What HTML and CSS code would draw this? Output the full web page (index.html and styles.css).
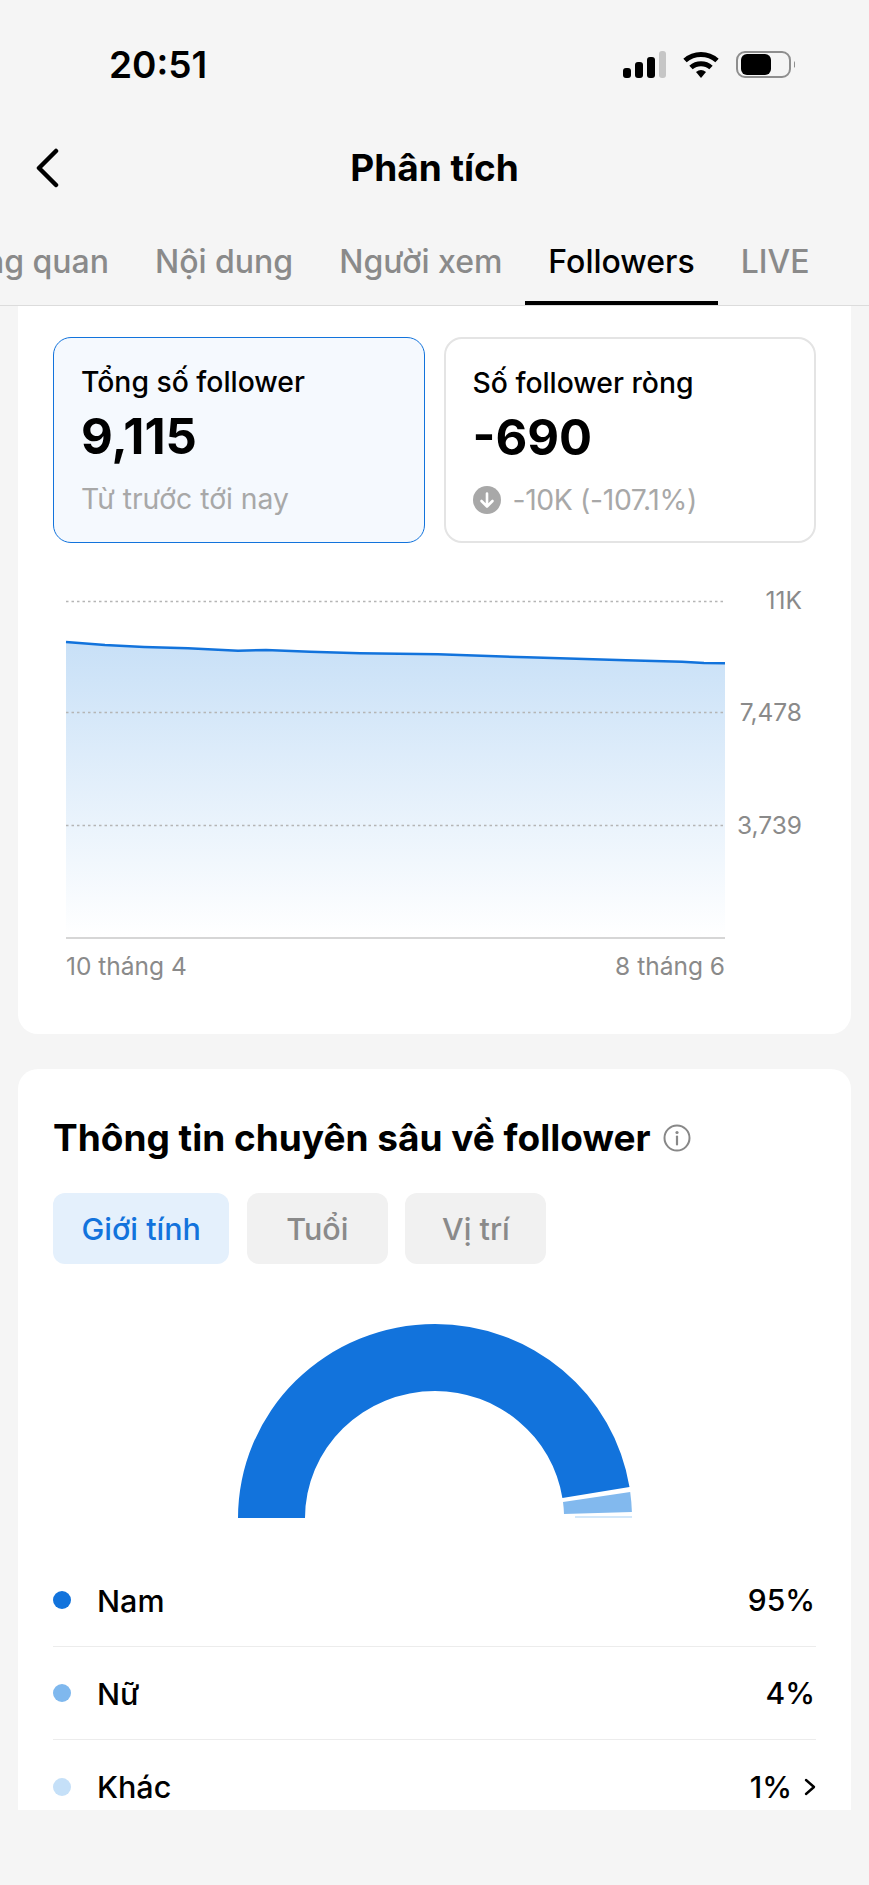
FILE: index.html
```html
<!DOCTYPE html>
<html lang="vi">
<head>
<meta charset="utf-8">
<title>Phân tích</title>
<link rel="stylesheet" href="styles.css">
</head>
<body>
<div class="screen">
  <header class="status">
    <span class="time">20:51</span>
    <svg class="status-icons" viewBox="623 50 172 30" width="172" height="30" aria-hidden="true">
      <rect x="623" y="68" width="8" height="10" rx="3" fill="#000"/>
      <rect x="635" y="62" width="8" height="16" rx="3" fill="#000"/>
      <rect x="647" y="57" width="8" height="21" rx="3" fill="#000"/>
      <rect x="659" y="51" width="7" height="27" rx="3" fill="#c6c6c6"/>
      <g fill="none" stroke="#000" stroke-width="5">
        <path d="M685 60.500 A24 24 0 0 1 717 60.500"/>
        <path d="M691 67.500 A15 15 0 0 1 711 67.500"/>
      </g>
      <path d="M696 72 Q701 68 706 72 L701 78 Z" fill="#000"/>
      <rect x="737" y="52" width="53" height="25" rx="8" fill="none" stroke="#8e8e8e" stroke-width="2"/>
      <rect x="741" y="54" width="30" height="21" rx="6" fill="#000"/>
      <path d="M794 61 L797 64.500 L794 68 Z" fill="#8e8e8e"/>
    </svg>
  </header>

  <nav class="nav">
    <svg class="back" width="24" height="40" viewBox="0 0 24 40" aria-hidden="true">
      <path d="M21 3 L4 20 L21 37" fill="none" stroke="#000" stroke-width="4.500" stroke-linecap="round" stroke-linejoin="round"/>
    </svg>
    <h1 class="title">Phân tích</h1>
  </nav>

  <div class="tabs">
    <span class="tab">Tổng quan</span>
    <span class="tab">Nội dung</span>
    <span class="tab">Người xem</span>
    <span class="tab tab-active">Followers</span>
    <span class="tab">LIVE</span>
  </div>

  <section class="card card-chart">
    <div class="stats">
      <div class="stat stat-active">
        <div class="stat-label">Tổng số follower</div>
        <div class="stat-value">9,115</div>
        <div class="stat-sub">Từ trước tới nay</div>
      </div>
      <div class="stat">
        <div class="stat-label">Số follower ròng</div>
        <div class="stat-value">-690</div>
        <div class="stat-sub">
          <svg class="down" width="28" height="28" viewBox="0 0 28 28" aria-hidden="true">
            <circle cx="14" cy="14" r="14" fill="#a8a8a8"/>
            <path d="M14 7.500 V20 M8.500 15 L14 20.500 L19.500 15" fill="none" stroke="#fff" stroke-width="2.600" stroke-linecap="round" stroke-linejoin="round"/>
          </svg>
          <span class="stat-delta">-10K (-107.1%)</span>
        </div>
      </div>
    </div>

    <svg class="chart" viewBox="53 580 763 410" width="763" height="410">
      <defs>
        <linearGradient id="area" x1="0" y1="0" x2="0" y2="1">
          <stop offset="0" stop-color="#c8e0f7"/>
          <stop offset="1" stop-color="#ffffff"/>
        </linearGradient>
      </defs>
      <path d="M66 642 L105 645 L144 647 L188 648.300 L238 650.700 L266 650 L310 651.700 L360 653.300 L438 654.300 L527 657.300 L626 660.300 L682 661.700 L704 663 L725 663.300 V936 H66 Z" fill="url(#area)"/>
      <g class="grid">
        <line x1="66" y1="601.500" x2="725" y2="601.500"/>
        <line x1="66" y1="712.500" x2="725" y2="712.500"/>
        <line x1="66" y1="825.500" x2="725" y2="825.500"/>
      </g>
      <path d="M66 642 L105 645 L144 647 L188 648.300 L238 650.700 L266 650 L310 651.700 L360 653.300 L438 654.300 L527 657.300 L626 660.300 L682 661.700 L704 663 L725 663.300" fill="none" stroke="#1273dc" stroke-width="2.500"/>
      <line x1="66" y1="938" x2="725" y2="938" stroke="#d6d6d6" stroke-width="2"/>
      <g class="axis">
        <text x="802" y="609" text-anchor="end">11K</text>
        <text x="802" y="721" text-anchor="end">7,478</text>
        <text x="802" y="834" text-anchor="end">3,739</text>
        <text x="66" y="975">10 tháng 4</text>
        <text x="725" y="975" text-anchor="end">8 tháng 6</text>
      </g>
    </svg>
  </section>

  <section class="card card-insight">
    <div class="heading">
      <h2 class="heading-text">Thông tin chuyên sâu về follower</h2>
      <svg width="28" height="28" viewBox="0 0 28 28" aria-hidden="true">
        <circle cx="14" cy="14" r="12.500" fill="none" stroke="#888" stroke-width="2"/>
        <circle cx="14" cy="8.500" r="1.600" fill="#888"/>
        <path d="M14 12.500 V20.500" stroke="#888" stroke-width="2.200" stroke-linecap="round"/>
      </svg>
    </div>

    <div class="pills">
      <span class="pill pill-active">Giới tính</span>
      <span class="pill">Tuổi</span>
      <span class="pill">Vị trí</span>
    </div>

    <svg class="donut" viewBox="53 1300 763 254" width="763" height="254" aria-hidden="true">
      <path d="M238 1518 A197 194 0 0 1 435 1324 A197 194 0 0 1 629.500 1487 L562.400 1498 A129 127 0 0 0 435 1391 A130 127 0 0 0 305 1518 Z" fill="#1273dc"/>
      <path d="M630.200 1492 A197 194 0 0 1 631.900 1512 L564 1514 A129 127 0 0 0 563 1502 Z" fill="#82b9ee"/>
      <path d="M575 1517 H632" stroke="#c5e0f8" stroke-width="1.500"/>
    </svg>

    <ul class="legend">
      <li class="row"><i class="dot dot-a"></i><span class="row-label">Nam</span><span class="row-value">95%</span></li>
      <li class="row"><i class="dot dot-b"></i><span class="row-label">Nữ</span><span class="row-value">4%</span></li>
      <li class="row"><i class="dot dot-c"></i><span class="row-label">Khác</span><span class="row-value">1%</span>
        <svg class="row-chevron" width="12" height="18" viewBox="0 0 12 18" aria-hidden="true">
          <path d="M2 2 L10 9 L2 16" fill="none" stroke="#000" stroke-width="2.400" stroke-linecap="round" stroke-linejoin="round"/>
        </svg>
      </li>
    </ul>
  </section>
</div>
</body>
</html>
```

FILE: styles.css
```css
* { box-sizing: border-box; }
html, body { margin: 0; padding: 0; }
body {
  background: #f5f5f5;
  color: #000;
  font-family: Inter, "Noto Sans", "Liberation Sans", sans-serif;
}
.screen { width: 869px; height: 1885px; overflow: hidden; }

.status {
  height: 108px;
  padding: 45px 74px 0 109px;
  display: flex;
  justify-content: space-between;
  align-items: flex-start;
}
.time { font-size: 37px; font-weight: 600; line-height: 40px; }
.status-icons { margin-top: 5px; display: block; }

.nav {
  height: 120px;
  padding-left: 35px;
  display: grid;
  grid-template-columns: 1fr auto 1fr;
  align-items: center;
}
.back { display: block; }
.title { margin: 0; font-size: 37px; font-weight: 700; line-height: 44px; padding-right: 35px; }

.tabs {
  height: 78px;
  padding-right: 36.500px;
  display: flex;
  justify-content: flex-end;
  overflow: hidden;
  border-bottom: 1px solid #dcdcdc;
}
.tab {
  flex: none;
  height: 78px;
  padding: 0 23px;
  border-bottom: 5px solid transparent;
  font-size: 32px;
  font-weight: 500;
  line-height: 68px;
  color: #8a8a8a;
}
.tab-active { color: #000; border-bottom-color: #000; }

.card {
  width: 833px;
  margin-left: 18px;
  background: #fff;
  padding-left: 35px;
  padding-right: 35px;
}
.card-chart {
  height: 728px;
  padding-top: 31px;
  border-radius: 0 0 20px 20px;
  margin-bottom: 35px;
}
.stats { display: grid; grid-template-columns: 1fr 1fr; gap: 19px; }
.stat {
  height: 206px;
  padding: 23.500px 26.500px 0;
  border: 2px solid #e4e4e4;
  border-radius: 18px;
  background: #fff;
}
.stat-active { border: 1.800px solid #1273dc; background: #f5f9fe; padding: 23.700px 27px 0; }
.stat-label { font-size: 28.300px; font-weight: 500; line-height: 40px; }
.stat-value { margin-top: 7px; font-size: 49px; font-weight: 700; line-height: 56px; }
.stat-sub {
  margin-top: 14px;
  font-size: 28.300px;
  line-height: 40px;
  color: #a8a8a8;
  display: flex;
  align-items: center;
  gap: 12px;
}
.stat-delta { letter-spacing: -0.350px; }
.down { flex: none; display: block; }

.chart { display: block; margin-top: 37px; }
.grid line { stroke: #b5b5b5; stroke-width: 1.500; stroke-dasharray: 2.500 3; }
.axis text { font-size: 24.500px; fill: #8a8a8a; font-family: Inter, "Noto Sans", sans-serif; }

.card-insight {
  height: 741px;
  padding-top: 49px;
  border-radius: 20px 20px 0 0;
  overflow: hidden;
}
.heading { height: 40px; display: flex; align-items: center; gap: 12px; }
.heading-text { margin: 0; font-size: 37px; font-weight: 700; line-height: 40px; }
.pills { margin-top: 35px; display: flex; gap: 17.500px; }
.pill {
  height: 71px;
  padding: 0 28.500px;
  min-width: 141px;
  border-radius: 12px;
  background: #f1f1f1;
  color: #8a8a8a;
  font-size: 30.500px;
  font-weight: 500;
  line-height: 71px;
  text-align: center;
}
.pill-active { background: #e4f0fc; color: #1273dc; }

.donut { display: block; margin-top: 36px; }

.legend { margin: 0; padding: 0; list-style: none; }
.row {
  height: 93px;
  display: flex;
  align-items: center;
  border-bottom: 1.500px solid #ececec;
}
.row:last-child { border-bottom: 0; }
.dot { flex: none; width: 18px; height: 18px; border-radius: 50%; margin-right: 26px; }
.dot-a { background: #1273dc; }
.dot-b { background: #7fb8ee; }
.dot-c { background: #c5e0f8; }
.row-label { flex: 1; font-size: 30.500px; font-weight: 500; }
.row-value { font-size: 30px; font-weight: 500; padding-right: 1px; }
.row-chevron { flex: none; margin-left: 11px; display: block; }
```
